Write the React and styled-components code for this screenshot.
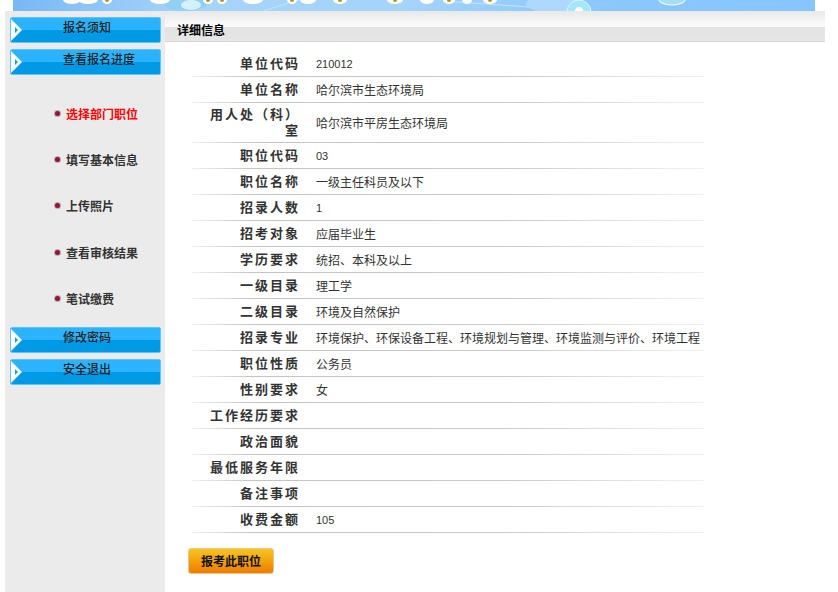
import React from "react";
import styled, { createGlobalStyle } from "styled-components";

const FONT = `"Liberation Sans", "Noto Sans CJK SC", sans-serif`;

const menuTop = ["报名须知", "查看报名进度"];
const progress = ["选择部门职位", "填写基本信息", "上传照片", "查看审核结果", "笔试缴费"];
const menuBottom = ["修改密码", "安全退出"];

const rows = [
  { label: "单位代码", value: "210012", num: true },
  { label: "单位名称", value: "哈尔滨市生态环境局" },
  { label: "用人处（科）室", value: "哈尔滨市平房生态环境局" },
  { label: "职位代码", value: "03", num: true },
  { label: "职位名称", value: "一级主任科员及以下" },
  { label: "招录人数", value: "1", num: true },
  { label: "招考对象", value: "应届毕业生" },
  { label: "学历要求", value: "统招、本科及以上" },
  { label: "一级目录", value: "理工学" },
  { label: "二级目录", value: "环境及自然保护" },
  { label: "招录专业", value: "环境保护、环保设备工程、环境规划与管理、环境监测与评价、环境工程" },
  { label: "职位性质", value: "公务员" },
  { label: "性别要求", value: "女" },
  { label: "工作经历要求", value: "" },
  { label: "政治面貌", value: "" },
  { label: "最低服务年限", value: "" },
  { label: "备注事项", value: "" },
  { label: "收费金额", value: "105", num: true },
];

// bottoms of the banner title characters, cut off by the top of the window
const titleBlobs = [
  [72, 9], [88, 10], [107, 5], [160, 10], [208, 5], [222, 5], [253, 10], [292, 5],
  [308, 8], [340, 7], [395, 8], [427, 7], [449, 6], [467, 5], [490, 7],
];
const yellowAt = [107, 208, 222, 292, 340, 395, 449, 490];

function BannerArt() {
  return (
    <svg width="802" height="11" viewBox="0 0 802 11">
      <defs>
        <linearGradient id="sky" x1="0" x2="1" y1="0" y2="0">
          <stop offset="0" stopColor="#78b8f6" />
          <stop offset="0.22" stopColor="#a6d4fb" />
          <stop offset="0.5" stopColor="#a4d3fb" />
          <stop offset="0.7" stopColor="#8cc8fd" />
          <stop offset="1" stopColor="#86c5ff" />
        </linearGradient>
      </defs>
      <rect width="802" height="11" fill="url(#sky)" />
      <ellipse cx="172" cy="3" rx="22" ry="8" fill="#8fd0f4" />
      <ellipse cx="178" cy="5" rx="10" ry="5" fill="#d4f1fb" />
      <path d="M250 11 L285 0 M430 1 L545 9" stroke="#c4e4fd" strokeWidth="1" />
      <ellipse cx="541" cy="4" rx="28" ry="9" fill="#aed8fd" />
      <circle cx="566" cy="12" r="12" fill="#a4e6fb" stroke="#d8f6ff" />
      <circle cx="566" cy="11" r="4" fill="#ffffff" />
      <ellipse cx="659" cy="0" rx="13" ry="5" fill="#a8def8" stroke="#ffffff" />
      {titleBlobs.map(([x, w]) => (
        <ellipse key={x} cx={x - 13} cy="0" rx={w} ry="4" fill="#fffdf0" />
      ))}
      {yellowAt.map((x) => (
        <ellipse key={x} cx={x - 13} cy="0" rx="2" ry="2" fill="#a89a20" />
      ))}
    </svg>
  );
}

function Arrow() {
  return (
    <ArrowSvg width="13" height="26" viewBox="0 0 13 26">
      <path d="M1 2 L12 13 L1 24 Z" fill="#ffffff" />
      <path d="M5 10 L8 13 L5 16 Z" fill="#1a9ee8" />
    </ArrowSvg>
  );
}

export default function App() {
  return (
    <Page>
      <GlobalStyle />
      <Banner>
        <BannerArt />
      </Banner>
      <Main>
        <Sidebar>
          {menuTop.map((item) => (
            <MenuButton key={item}>
              <Arrow />
              {item}
            </MenuButton>
          ))}
          <StepList>
            {progress.map((item, i) => (
              <Step key={item} $active={i === 0}>
                <Dot />
                {item}
              </Step>
            ))}
          </StepList>
          {menuBottom.map((item) => (
            <MenuButton key={item}>
              <Arrow />
              {item}
            </MenuButton>
          ))}
        </Sidebar>
        <Content>
          <TitleBar>
            <Title>详细信息</Title>
          </TitleBar>
          <DetailTable>
            {rows.map((row) => (
              <Row key={row.label}>
                <Label>{row.label}</Label>
                <Value $num={row.num}>{row.value}</Value>
              </Row>
            ))}
          </DetailTable>
          <ApplyButton>报考此职位</ApplyButton>
        </Content>
      </Main>
    </Page>
  );
}

const GlobalStyle = createGlobalStyle`
  html, body {
    margin: 0;
    padding: 0;
    background: #fff;
    overflow: hidden;
  }
`;
const Page = styled.div`
  height: 592px;
  display: flex;
  flex-direction: column;
  font-family: ${FONT};
  font-size: 12px;
  color: #333;
`;
const Banner = styled.div`
  height: 11px;
  margin-left: 13px;
  width: 802px;
  overflow: hidden;
  svg {
    display: block;
  }
`;
const Main = styled.div`
  flex: 1;
  display: flex;
  width: 820px;
  margin-left: 5px;
`;
const Sidebar = styled.div`
  width: 160px;
  box-sizing: border-box;
  background: #ebebeb;
  padding: 6px 4px 0 5px;
  display: flex;
  flex-direction: column;
  gap: 6px;
`;
const MenuButton = styled.div`
  position: relative;
  box-sizing: border-box;
  width: 151px;
  height: 26px;
  padding: 1px 0 0 52px;
  border: 1px solid #5cc4ff;
  border-radius: 2px;
  line-height: 18px;
  font-weight: 500;
  color: #222;
  background: linear-gradient(#2cb3ff 0, #2cb3ff 12px, #0099e6 12px, #0099e6 100%);
`;
const ArrowSvg = styled.svg`
  position: absolute;
  left: -1px;
  top: -1px;
`;
const StepList = styled.div`
  margin: 9px 0 -1px;
  display: flex;
  flex-direction: column;
`;
const Step = styled.div`
  height: 46.4px;
  display: flex;
  align-items: center;
  padding-left: 45px;
  gap: 6px;
  font-weight: bold;
  color: ${(p) => (p.$active ? "#ff0000" : "#333")};
`;
const Dot = styled.span`
  width: 5px;
  height: 5px;
  border-radius: 50%;
  background: #a01030;
  box-shadow: 0 0 0 1px #b0b0b8;
`;
const Content = styled.div`
  flex: 1;
  display: flex;
  flex-direction: column;
  align-items: flex-start;
`;
const TitleBar = styled.div`
  align-self: stretch;
  height: 31px;
  box-sizing: border-box;
  padding: 13px 0 0 12px;
  border-bottom: 1px solid #d8d8d8;
  background: linear-gradient(#e8e8e8 0, #fdfdfd 16px, #e2e2e2 16px, #e6e6e6 100%);
`;
const Title = styled.div`
  font-weight: bold;
  color: #000;
  line-height: 15px;
`;
const DetailTable = styled.div`
  width: 512px;
  margin: 9px 0 0 27px;
`;
const Row = styled.div`
  display: flex;
  align-items: center;
  box-sizing: border-box;
  min-height: 26px;
  padding: 4px 0 3px;
  border-bottom: 1px solid;
  border-image: linear-gradient(90deg, #f0f0f0 0, #c4c4c4 12%, #c8c8c8 60%, #f2f2f2 100%) 1;
`;
const Label = styled.div`
  width: 108px;
  flex: none;
  box-sizing: border-box;
  padding-left: 10px;
  text-align: right;
  font-size: 13px;
  font-weight: bold;
  letter-spacing: 2px;
  line-height: 16px;
  color: #333;
`;
const Value = styled.div`
  margin: ${(p) => (p.$num ? "0" : "2px")} 0 0 16px;
  font-size: ${(p) => (p.$num ? "11px" : "12px")};
  line-height: 16px;
  color: #333;
  white-space: nowrap;
`;
const ApplyButton = styled.button`
  margin: 15px 0 0 23px;
  width: 86px;
  height: 26px;
  padding: 0 0 2px;
  border: 1px solid #e8c890;
  border-radius: 3px;
  font-family: ${FONT};
  font-size: 12px;
  font-weight: bold;
  color: #111;
  background: linear-gradient(#f8c61e, #ee7c00);
`;
